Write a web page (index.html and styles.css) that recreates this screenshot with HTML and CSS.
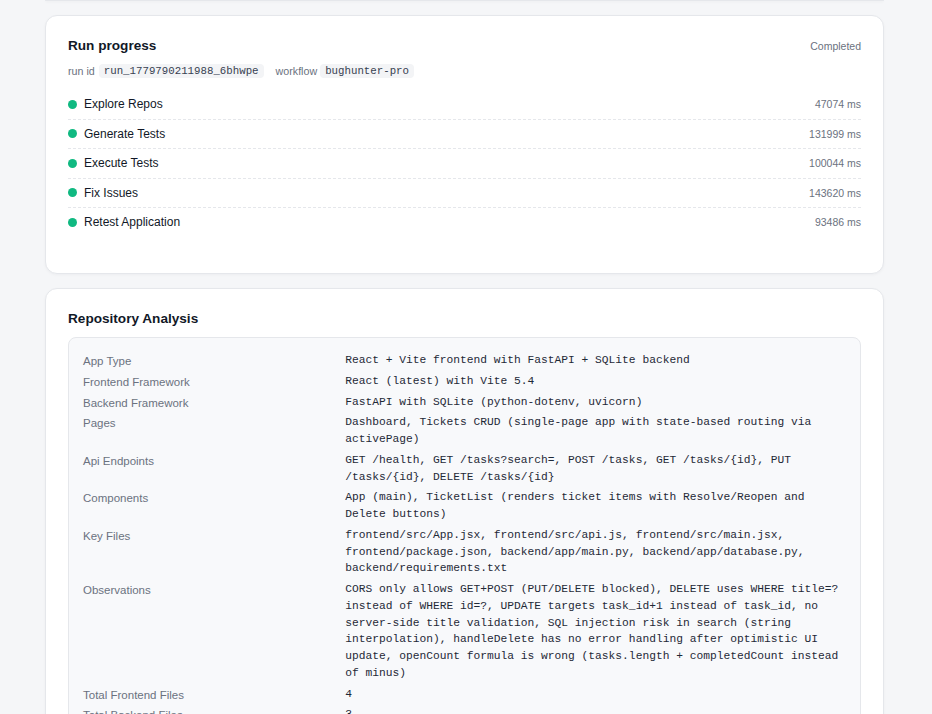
FILE: index.html
```html
<!DOCTYPE html>
<html lang="en">
<head>
<meta charset="utf-8">
<title>Run</title>
<link rel="stylesheet" href="styles.css">
</head>
<body>
<main class="page">
  <div class="card card-tail"></div>

  <section class="card">
    <header class="card-head">
      <h2 class="card-title">Run progress</h2>
      <span class="status">Completed</span>
    </header>
    <div class="meta">
      <span class="meta-label">run id</span>
      <code class="chip">run_1779790211988_6bhwpe</code>
      <span class="meta-label meta-gap">workflow</span>
      <code class="chip chip-tight">bughunter-pro</code>
    </div>
    <ul class="steps">
      <li class="step"><span class="dot"></span><span class="step-name">Explore Repos</span><span class="step-time">47074 ms</span></li>
      <li class="step"><span class="dot"></span><span class="step-name">Generate Tests</span><span class="step-time">131999 ms</span></li>
      <li class="step"><span class="dot"></span><span class="step-name">Execute Tests</span><span class="step-time">100044 ms</span></li>
      <li class="step"><span class="dot"></span><span class="step-name">Fix Issues</span><span class="step-time">143620 ms</span></li>
      <li class="step"><span class="dot"></span><span class="step-name">Retest Application</span><span class="step-time">93486 ms</span></li>
    </ul>
  </section>

  <section class="card">
    <header class="card-head">
      <h2 class="card-title">Repository Analysis</h2>
    </header>
    <dl class="panel">
      <dt>App Type</dt>
      <dd>React + Vite frontend with FastAPI + SQLite backend</dd>
      <dt>Frontend Framework</dt>
      <dd>React (latest) with Vite 5.4</dd>
      <dt>Backend Framework</dt>
      <dd>FastAPI with SQLite (python-dotenv, uvicorn)</dd>
      <dt>Pages</dt>
      <dd>Dashboard, Tickets CRUD (single-page app with state-based routing via activePage)</dd>
      <dt>Api Endpoints</dt>
      <dd>GET /health, GET /tasks?search=, POST /tasks, GET /tasks/{id}, PUT /tasks/{id}, DELETE /tasks/{id}</dd>
      <dt>Components</dt>
      <dd>App (main), TicketList (renders ticket items with Resolve/Reopen and Delete buttons)</dd>
      <dt>Key Files</dt>
      <dd>frontend/src/App.jsx, frontend/src/api.js, frontend/src/main.jsx, frontend/package.json, backend/app/main.py, backend/app/database.py, backend/requirements.txt</dd>
      <dt>Observations</dt>
      <dd>CORS only allows GET+POST (PUT/DELETE blocked), DELETE uses WHERE title=? instead of WHERE id=?, UPDATE targets task_id+1 instead of task_id, no server-side title validation, SQL injection risk in search (string interpolation), handleDelete has no error handling after optimistic UI update, openCount formula is wrong (tasks.length + completedCount instead of minus)</dd>
      <dt>Total Frontend Files</dt>
      <dd>4</dd>
      <dt>Total Backend Files</dt>
      <dd>3</dd>
    </dl>
  </section>
</main>
</body>
</html>
```

FILE: styles.css
```css
* { box-sizing: border-box; }

html, body {
  margin: 0;
  padding: 0;
  background: #f5f6f8;
  font-family: "Liberation Sans", Arial, sans-serif;
  color: #111827;
}

.page {
  display: flex;
  flex-direction: column;
  gap: 14px;
  padding: 0 48px 40px 45px;
}

.card {
  background: #ffffff;
  border: 1px solid #e5e7eb;
  border-radius: 12px;
  box-shadow: 0 1px 3px rgba(15, 23, 42, 0.04);
  padding: 21px 22px 36px 22px;
}

.card-tail {
  height: 1px;
  padding: 0;
  border-top: none;
  border-radius: 0 0 12px 12px;
  box-shadow: 0 1px 3px rgba(15, 23, 42, 0.06);
}

.card-head {
  display: flex;
  justify-content: space-between;
  align-items: center;
}

.card-title {
  margin: 0;
  font-size: 13.6px;
  line-height: 17.6px;
  font-weight: 700;
  color: #111827;
}

.status {
  font-size: 10.5px;
  color: #6b7280;
}

.meta {
  margin-top: 9px;
  display: flex;
  align-items: center;
  gap: 4px;
  font-size: 10.7px;
  color: #6b7280;
}

.meta-gap { margin-left: 8px; }

.chip {
  font-family: "Liberation Mono", "DejaVu Sans Mono", monospace;
  font-size: 10.75px;
  line-height: 12.5px;
  padding: 1px 5px;
  background: #f3f4f6;
  color: #374151;
  border-radius: 4px;
}

.chip-tight { margin-left: -1px; }

.steps {
  list-style: none;
  margin: 12px 0 0 0;
  padding: 0;
}

.step {
  display: flex;
  align-items: center;
  padding: 6.25px 0;
  line-height: 16px;
}

.step + .step { border-top: 1px dashed #e5e7eb; }

.dot {
  width: 9px;
  height: 9px;
  border-radius: 50%;
  background: #10b981;
  flex: none;
}

.step-name {
  margin-left: 7px;
  font-size: 12px;
  color: #111827;
  flex: 1;
}

.step-time {
  font-size: 10.5px;
  color: #6b7280;
}

.panel {
  margin: 10px 0 0 0;
  padding: 14px;
  background: #f8f9fb;
  border: 1px solid #e5e7eb;
  border-radius: 8px;
  display: grid;
  grid-template-columns: 1fr 2fr;
  column-gap: 12px;
  row-gap: 4px;
}

.panel dt {
  font-size: 11.5px;
  line-height: 16.75px;
  color: #6b7280;
  padding-top: 1px;
  margin-bottom: -1px;
}

.panel dd {
  margin: 0;
  font-family: "Liberation Mono", "DejaVu Sans Mono", monospace;
  font-size: 11.25px;
  line-height: 16.75px;
  color: #1f2937;
}
```
